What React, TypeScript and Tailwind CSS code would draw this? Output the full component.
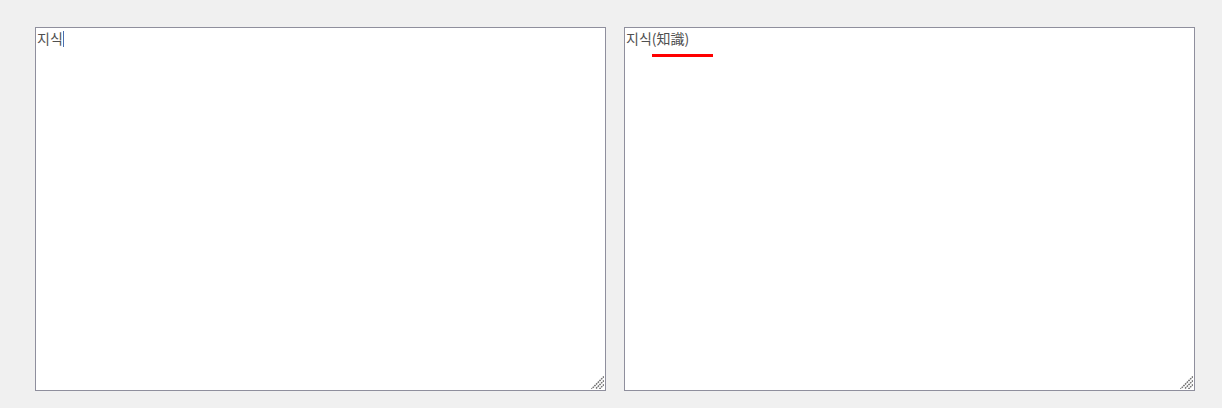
import React from "react";

function Grip() {
  return (
    <svg
      className="absolute right-[2px] bottom-[2px]"
      width="13"
      height="13"
      viewBox="0 0 13 13"
    >
      <g stroke="#6e6e6e" strokeWidth="1.5" strokeDasharray="1.6 0.8">
        <line x1="13" y1="0.5" x2="0.5" y2="13" />
        <line x1="13" y1="4.5" x2="4.5" y2="13" />
        <line x1="13" y1="8.5" x2="8.5" y2="13" />
      </g>
    </svg>
  );
}

export default function App() {
  const font = { fontFamily: '"Noto Sans CJK KR", "Noto Sans", sans-serif', resize: "none" as const };
  return (
    <div className="w-[1222px] h-[408px] bg-[#f0f0f0] flex items-start gap-[18px] pl-[35px] pt-[27px]">
      <div className="relative">
        <textarea
          defaultValue="지식"
          className="block w-[571px] h-[364px] bg-white border border-[#8f8f9d] p-[1px] text-[14px] leading-[18px] font-normal text-[#505050] outline-none"
          style={font}
        />
        <div className="absolute left-[28px] top-[4px] w-[1px] h-[16px] bg-[#4a6fb0]" />
        <Grip />
      </div>
      <div className="relative">
        <textarea
          defaultValue="지식(知識)"
          className="block w-[571px] h-[364px] bg-white border border-[#8f8f9d] p-[1px] text-[14px] leading-[18px] font-normal text-[#505050] outline-none"
          style={font}
        />
        <div className="absolute left-[28px] top-[27px] w-[61px] h-[3px] bg-[#ff0000]" />
        <Grip />
      </div>
    </div>
  );
}
